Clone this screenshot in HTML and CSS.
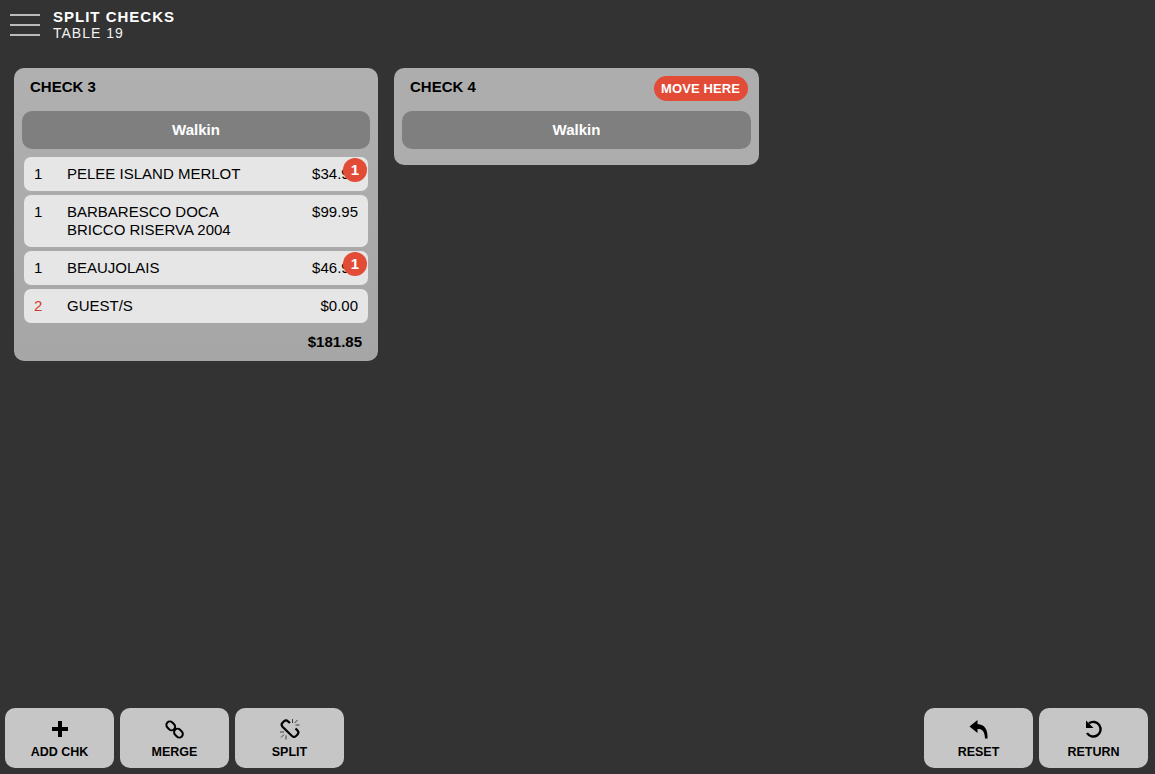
FILE: index.html
```html
<!DOCTYPE html>
<html>
<head>
	<meta charset="utf-8">
	<title>Split Checks</title>
	<link rel="stylesheet" href="styles.css">
</head>
<body>
<div class="screen">
	<div class="top">
		<div class="menu"><span></span><span></span><span></span></div>
		<div class="heading">
			<div class="heading-main">SPLIT CHECKS</div>
			<div class="heading-sub">TABLE 19</div>
		</div>
	</div>
	<div class="checks">
		<div class="check">
			<div class="check-head"><span class="check-name">CHECK 3</span></div>
			<div class="guest-bar">Walkin</div>
			<div class="items">
				<div class="item">
					<span class="qty">1</span><span class="name">PELEE ISLAND MERLOT</span><span class="price">$34.95</span>
					<span class="badge">1</span>
				</div>
				<div class="item">
					<span class="qty">1</span><span class="name">BARBARESCO DOCA<br>BRICCO RISERVA 2004</span><span class="price">$99.95</span>
				</div>
				<div class="item">
					<span class="qty">1</span><span class="name">BEAUJOLAIS</span><span class="price">$46.95</span>
					<span class="badge">1</span>
				</div>
				<div class="item">
					<span class="qty red">2</span><span class="name">GUEST/S</span><span class="price">$0.00</span>
				</div>
			</div>
			<div class="total">$181.85</div>
		</div>
		<div class="check check-empty">
			<div class="check-head"><span class="check-name">CHECK 4</span><span class="move">MOVE HERE</span></div>
			<div class="guest-bar">Walkin</div>
		</div>
	</div>
	<div class="bottom">
		<div class="btn-group">
			<div class="btn">
				<svg width="24" height="24" viewBox="0 0 24 24"><path d="M10 4h4v6h6v4h-6v6h-4v-6H4v-4h6z"/></svg>
				<span>ADD CHK</span>
			</div>
			<div class="btn">
				<svg width="24" height="24" viewBox="0 0 24 24" fill="none" stroke="#000" stroke-width="2"><rect x="3" y="5.400" width="9.500" height="7" rx="3.500" transform="rotate(45 7.750 8.900)"/><rect x="10.700" y="12.600" width="9.500" height="7" rx="3.500" transform="rotate(45 15.450 16.100)"/></svg>
				<span>MERGE</span>
			</div>
			<div class="btn">
				<svg width="24" height="24" viewBox="0 0 24 24" fill="none" stroke="#000"><path stroke-width="2.200" d="M12 6 10 4.300a3 3 0 0 0-4 0L4.500 5.800a3 3 0 0 0 0 4L14 19a3 3 0 0 0 4 0l1.500-1.500a3 3 0 0 0 0-4l-2-2"/><path stroke-width=".9" stroke="#333" d="M14.500 2v4M19.500 3l-3 3M21.500 8h-4M2 15h4M3 20.500l3-3M8 22.500v-4"/></svg>
				<span>SPLIT</span>
			</div>
		</div>
		<div class="btn-group">
			<div class="btn">
				<svg width="24" height="24" viewBox="0 0 24 24"><path d="M10.500 3 2.500 9.500l8 6.500v-4c4.500 0 7 1.500 7.500 9.500h2.500c.5-8.500-2.500-14-10-14.500z"/></svg>
				<span>RESET</span>
			</div>
			<div class="btn">
				<svg width="24" height="24" viewBox="0 0 24 24" fill="none" stroke="#000" stroke-width="2.400"><path d="M7 6.300A7.300 7.300 0 1 1 5 16"/><path fill="#000" stroke="none" d="M4 3.500v7.500h7.500z"/></svg>
				<span>RETURN</span>
			</div>
		</div>
	</div>
</div>
</body>
</html>
```

FILE: styles.css
```css
html,body{margin:0;padding:0;height:100%;background:#333;}
body{font-family:"Liberation Sans",Arial,sans-serif;color:#000;}
.screen{height:774px;display:flex;flex-direction:column;box-sizing:border-box;}

.top{display:flex;height:68px;box-sizing:border-box;padding:9px 0 0 10px;}
.menu{width:30px;height:26px;padding-top:5px;margin-right:13px;}
.menu span{display:block;height:2px;background:#bbb;margin-bottom:8px;}
.heading{color:#fff;}
.heading-main{font-size:15px;line-height:16px;font-weight:700;letter-spacing:1px;}
.heading-sub{font-size:14px;line-height:16px;letter-spacing:1px;color:#f2f2f2;}

.checks{flex:1;display:flex;align-items:flex-start;gap:16px;padding-left:14px;}
.check{width:364px;box-sizing:border-box;background:linear-gradient(#b0b0b0,#a6a6a6);border-radius:10px;padding:0 8px;}
.check-empty{width:365px;padding-bottom:16px;background:#adadad;}
.check-head{height:43px;display:flex;justify-content:space-between;align-items:flex-start;padding:10px 3px 0 8px;box-sizing:border-box;}
.check-name{font-size:15px;line-height:18px;font-weight:700;}
.move{background:#e24c36;color:#fff;font-size:13px;font-weight:700;line-height:26px;height:25px;padding:0 8px 0 7px;border-radius:13px;margin-top:-2px;letter-spacing:.1px;}
.guest-bar{height:38px;line-height:37px;background:#7f7f7f;color:#fff;border-radius:10px;text-align:center;font-size:15px;font-weight:700;}

.items{padding:8px 2px 0;display:flex;flex-direction:column;gap:4px;}
.item{position:relative;display:flex;background:#e6e6e6;border-radius:7px;padding:8px 10px;font-size:15px;line-height:18px;}
.qty{width:33px;}
.red{color:#d23c2a;}
.name{flex:1;}
.badge{position:absolute;top:1px;right:1px;width:24px;height:24px;line-height:23px;border-radius:50%;background:#e24c36;color:#fff;text-align:center;font-size:15px;font-weight:700;}
.total{text-align:right;font-size:15px;font-weight:700;line-height:18px;padding:10px 8px 10px 0;}

.bottom{display:flex;justify-content:space-between;padding:0 7px 6px 5px;}
.btn-group{display:flex;gap:6px;}
.btn{width:109px;height:60px;background:#c6c6c6;border-radius:10px;display:flex;flex-direction:column;align-items:center;box-sizing:border-box;padding-top:9px;}
.btn svg{display:block;}
.btn span{font-size:12.5px;line-height:14px;font-weight:700;margin-top:4px;}
```
